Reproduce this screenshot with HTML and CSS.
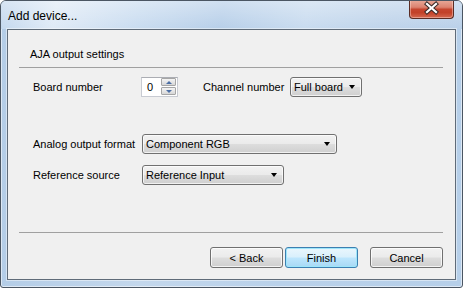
FILE: index.html
```html
<!DOCTYPE html>
<html>
<head>
<meta charset="utf-8">
<title>Add device...</title>
<link rel="stylesheet" href="styles.css">
</head>
<body>
<div class="window">
  <div class="titlebar">
    <span class="title">Add device...</span>
    <div class="close">
      <svg width="45" height="19" viewBox="0 0 45 19">
        <path d="M18 5 L27 13 M27 5 L18 13" stroke="#3a2a28" stroke-width="4.2" stroke-linecap="square" fill="none"/>
        <path d="M18 5 L27 13 M27 5 L18 13" stroke="#ffffff" stroke-width="2.2" stroke-linecap="square" fill="none"/>
      </svg>
    </div>
  </div>
  <div class="client">
    <div class="group-title">AJA output settings</div>
    <div class="sep"></div>

    <div class="row row1">
      <span class="label w108">Board number</span>
      <div class="spin">
        <span class="spin-text">0</span>
        <div class="spin-btns">
          <div class="spin-btn"><span class="tri-up"></span></div>
          <div class="spin-btn"><span class="tri-down"></span></div>
        </div>
      </div>
      <span class="label w87 ml25">Channel number</span>
      <div class="combo w72"><span class="combo-text">Full board</span><span class="arrow"></span></div>
    </div>

    <div class="row row2">
      <span class="label w109">Analog output format</span>
      <div class="combo w195"><span class="combo-text">Component RGB</span><span class="arrow"></span></div>
    </div>

    <div class="row row3">
      <span class="label w109">Reference source</span>
      <div class="combo w142"><span class="combo-text">Reference Input</span><span class="arrow"></span></div>
    </div>

    <div class="sep sep-bottom"></div>

    <div class="buttons">
      <div class="btn">&lt; Back</div>
      <div class="btn default">Finish</div>
      <div class="btn cancel">Cancel</div>
    </div>
  </div>
</div>
</body>
</html>
```

FILE: styles.css
```css
html, body {
  margin: 0;
  padding: 0;
  background: #ffffff;
}

.window {
  width: 463px;
  height: 288px;
  box-sizing: border-box;
  border: 1px solid #4b5663;
  border-radius: 6px 6px 3px 3px;
  background: linear-gradient(90deg, #b4cde7 0%, #c3d7ec 30%, #b9d1ea 60%, #b6cfe9 100%);
  box-shadow: inset 0 0 0 1px rgba(255,255,255,0.55);
  display: flex;
  flex-direction: column;
  font-family: "Liberation Sans", Arial, sans-serif;
  overflow: hidden;
}

.titlebar {
  height: 28px;
  display: flex;
  justify-content: space-between;
  align-items: flex-start;
  background:
    linear-gradient(180deg, rgba(255,255,255,0.35) 0%, rgba(255,255,255,0) 100%),
    linear-gradient(100deg, #c2d7ee 0%, #dfeaf6 12%, #c9dcf0 30%, #b7cfe9 48%, #c8dbef 66%, #bed3ea 85%, #b9d0e9 100%);
}

.title {
  font-size: 12px;
  color: #000;
  margin-left: 7px;
  margin-top: 8px;
  line-height: 14px;
}

.close {
  width: 45px;
  height: 19px;
  margin-top: -1px;
  margin-right: 8px;
  box-sizing: border-box;
  border: 1px solid #5a2c24;
  border-top: none;
  border-radius: 0 0 4px 4px;
  background: linear-gradient(180deg, #e9aa9a 0%, #dc8370 40%, #c5452e 52%, #c24128 70%, #d4684f 100%);
  box-shadow: inset 0 0 0 1px rgba(255,220,210,0.45);
}
.close svg {
  display: block;
  margin: -1px 0 0 -1px;
}

.client {
  flex: 1;
  margin: 0 6px 7px 6px;
  border: 1px solid #5f6b78;
  background: #f0f0f0;
  box-shadow: 0 0 0 1px rgba(255,255,255,0.45);
  font-size: 11px;
  color: #000;
}

.group-title {
  height: 37px;
  box-sizing: border-box;
  padding: 17px 0 0 22px;
  line-height: 14px;
}

.sep {
  height: 0;
  border-top: 1px solid #a0a0a0;
  margin: 0 12px 0 11px;
}
.sep-bottom {
  margin-top: 47px;
}

.row {
  display: flex;
  align-items: center;
  height: 20px;
  padding-left: 25px;
}
.row1 { margin-top: 9px; }
.row2 { margin-top: 37px; }
.row3 { margin-top: 11px; }

.label {
  flex: none;
  line-height: 14px;
  white-space: nowrap;
}
.w108 { width: 108px; }
.w109 { width: 109px; }
.w87 { width: 87px; }
.ml25 { margin-left: 25px; }

.spin {
  width: 37px;
  height: 20px;
  box-sizing: border-box;
  border: 1px solid #c8cbd2;
  border-top-color: #abadb3;
  background: #ffffff;
  display: flex;
  align-items: center;
  justify-content: space-between;
}
.spin-text {
  padding-left: 5px;
  line-height: 14px;
}
.spin-btns {
  width: 15px;
  display: flex;
  flex-direction: column;
  gap: 0;
  margin-right: 1px;
}
.spin-btn {
  height: 8px;
  box-sizing: border-box;
  border: 1px solid #a6a6a6;
  border-radius: 1px;
  background: linear-gradient(180deg, #f4f4f4 0%, #e6e6e6 50%, #d6d6d6 100%);
  display: flex;
  align-items: center;
  justify-content: center;
  margin-bottom: 1px;
}
.tri-up {
  width: 0; height: 0;
  border-left: 3px solid transparent;
  border-right: 3px solid transparent;
  border-bottom: 3px solid #4c6fa5;
}
.tri-down {
  width: 0; height: 0;
  border-left: 3px solid transparent;
  border-right: 3px solid transparent;
  border-top: 3px solid #4c6fa5;
}

.combo {
  flex: none;
  height: 20px;
  box-sizing: border-box;
  border: 1px solid #707070;
  border-radius: 3px;
  background: linear-gradient(180deg, #f2f2f2 0%, #ebebeb 48%, #dddddd 52%, #cfcfcf 100%);
  box-shadow: inset 0 0 0 1px rgba(255,255,255,0.7);
  display: flex;
  align-items: center;
  justify-content: space-between;
}
.combo-text {
  padding-left: 3px;
  line-height: 14px;
  white-space: nowrap;
}
.arrow {
  width: 0; height: 0;
  border-left: 3.5px solid transparent;
  border-right: 3.5px solid transparent;
  border-top: 4px solid #000;
  margin-right: 6px;
}
.w72 { width: 72px; }
.w195 { width: 195px; }
.w142 { width: 142px; }

.buttons {
  display: flex;
  justify-content: flex-end;
  margin: 14px 12px 0 0;
}
.btn {
  width: 73px;
  height: 21px;
  box-sizing: border-box;
  border: 1px solid #707070;
  border-radius: 3px;
  background: linear-gradient(180deg, #f2f2f2 0%, #ebebeb 48%, #dddddd 52%, #cfcfcf 100%);
  box-shadow: inset 0 0 0 1px rgba(255,255,255,0.75);
  display: flex;
  align-items: center;
  justify-content: center;
  line-height: 14px;
}
.btn.default {
  margin-left: 2px;
  border-color: #3c7fb1;
  background: linear-gradient(180deg, #eaf6fd 0%, #d9f0fc 48%, #bee6fd 52%, #a7d9f5 100%);
  box-shadow: inset 0 0 0 1px #9ee6fa;
}
.btn.cancel {
  margin-left: 12px;
}
```
